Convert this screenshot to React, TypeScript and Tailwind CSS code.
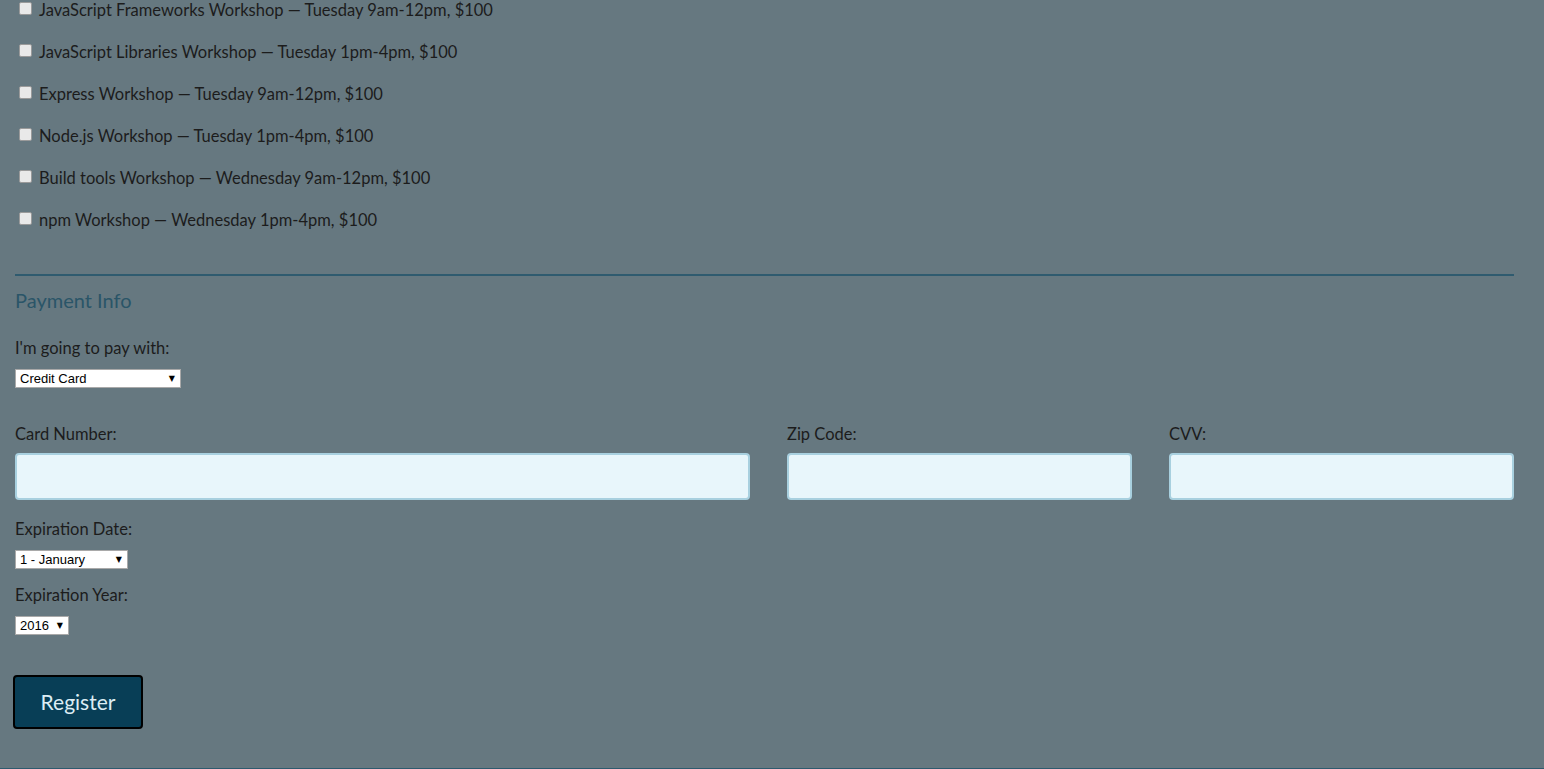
import React from "react";

const workshops = [
  "JavaScript Frameworks Workshop — Tuesday 9am-12pm, $100",
  "JavaScript Libraries Workshop — Tuesday 1pm-4pm, $100",
  "Express Workshop — Tuesday 9am-12pm, $100",
  "Node.js Workshop — Tuesday 1pm-4pm, $100",
  "Build tools Workshop — Wednesday 9am-12pm, $100",
  "npm Workshop — Wednesday 1pm-4pm, $100",
];

function Select({ value, width }: { value: string; width: string }) {
  return (
    <div className={`relative h-[19px] ${width}`}>
      <select className="block h-full w-full appearance-none border border-[#a9a9a9] bg-white pl-[4px] font-['Liberation_Sans',Arial,sans-serif] text-[13px] leading-[17px] text-black outline-none">
        <option>{value}</option>
      </select>
      <span className="pointer-events-none absolute inset-y-0 right-[6px] flex items-center font-['DejaVu_Sans',sans-serif] text-[8px] text-black">
        ▼
      </span>
    </div>
  );
}

function Field({ label }: { label: string }) {
  return (
    <div className="flex flex-col">
      <label className="h-[20px] leading-[20px]">{label}</label>
      <input
        type="text"
        className="mt-[9px] h-[47px] w-full rounded-[4px] border-2 border-[#a8d0df] bg-[#e8f6fb] px-2 outline-none"
      />
    </div>
  );
}

export default function App() {
  return (
    <div className="h-[769px] overflow-hidden border-b border-[#2e5a6e] bg-[#667880] pl-[15px] pr-[30px] font-['Lato',sans-serif] text-[16.5px] text-[#1c1c1c]">
      <fieldset>
        {workshops.map((w) => (
          <label key={w} className="mb-[22px] flex h-[20px] items-start leading-[20px]">
            <input
              type="checkbox"
              className="ml-[4px] mr-[7px] mt-[2px] h-[13px] w-[13px] appearance-none rounded-[2px] border border-[#9a9a9a] bg-[#e9e9e9]"
            />
            <span>{w}</span>
          </label>
        ))}
      </fieldset>

      <div className="mt-[22px] h-[2px] bg-[#2f5b6f]" />

      <fieldset>
        <h2 className="mt-[12px] h-[24px] text-[20px] leading-[24px] text-[#2a5568]">Payment Info</h2>

        <label className="mt-[26px] block h-[20px] leading-[20px]">I'm going to pay with:</label>
        <div className="mt-[11px]">
          <Select value="Credit Card" width="w-[166px]" />
        </div>

        <div className="mt-[36px] grid grid-cols-[49fr_23fr_23fr] gap-[37px]">
          <Field label="Card Number:" />
          <Field label="Zip Code:" />
          <Field label="CVV:" />
        </div>

        <label className="mt-[19px] block h-[20px] leading-[20px]">Expiration Date:</label>
        <div className="mt-[11px]">
          <Select value="1 - January" width="w-[113px]" />
        </div>

        <label className="mt-[16px] block h-[20px] leading-[20px]">Expiration Year:</label>
        <div className="mt-[11px]">
          <Select value="2016" width="w-[54px]" />
        </div>
      </fieldset>

      <button className="-ml-[2px] mt-[40px] h-[54px] w-[130px] rounded-[4px] border-2 border-black bg-[#083e56] text-[21px] text-[#dcedf4]">
        Register
      </button>
    </div>
  );
}
